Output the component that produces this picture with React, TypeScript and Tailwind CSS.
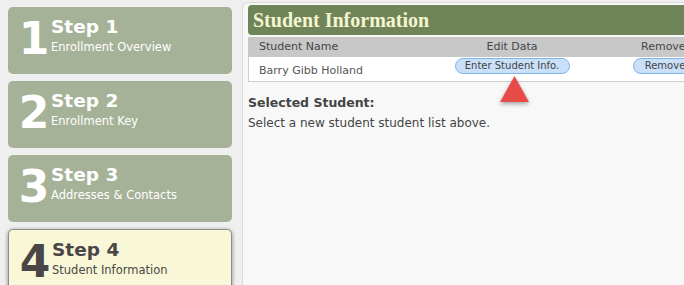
import React from "react";

const steps = [
  { n: "1", title: "Step 1", sub: "Enrollment Overview" },
  { n: "2", title: "Step 2", sub: "Enrollment Key" },
  { n: "3", title: "Step 3", sub: "Addresses & Contacts" },
  { n: "4", title: "Step 4", sub: "Student Information", active: true },
];

function StepCard({ n, title, sub, active }: { n: string; title: string; sub: string; active?: boolean }) {
  return (
    <div
      className={`h-[67px] shrink-0 rounded-[5px] pl-[9px] pt-[10px] flex items-start ${
        active
          ? "bg-[#f8f8d8] border border-[#8a8a8a] shadow-[0_1px_4px_rgba(0,0,0,0.45)] text-[#4a4646]"
          : "bg-[#a6b297] text-white"
      }`}
    >
      <div className="w-[34px] shrink-0 text-center text-[44px] font-bold leading-none">{n}</div>
      <div className="mt-[1px] flex flex-col">
        <div className="text-[18.5px] font-bold leading-none">{title}</div>
        <div className="mt-[5px] text-[11.5px] leading-none">{sub}</div>
      </div>
    </div>
  );
}

export default function App() {
  return (
    <div
      className="relative flex h-[285px] w-[684px] overflow-hidden bg-[#efefef]"
      style={{ fontFamily: '"DejaVu Sans", Verdana, sans-serif' }}
    >
      <aside className="ml-2 flex w-[224px] shrink-0 flex-col gap-[7px] pt-[7px]">
        {steps.map((s) => (
          <StepCard key={s.n} {...s} />
        ))}
      </aside>

      <main className="ml-[10px] mt-[2px] min-w-0 flex-1 rounded-tl-[6px] border-l border-t border-[#dadada] bg-[#f8f8f8] pl-[5px] pt-[2px]">
        <div className="w-[506px]">
          <div className="flex h-[30px] items-center rounded-[4px] bg-[#6f8459] pl-[5px]">
            <h1
              className="text-[20px] font-bold text-[#f5f5cf]"
              style={{ fontFamily: '"Liberation Serif", "Times New Roman", serif' }}
            >
              Student Information
            </h1>
          </div>

          <div className="mt-[2px] text-[11px]">
            <div className="flex h-[20px] items-center bg-[#c8c8c8] text-[#454545]">
              <div className="w-[200px] pl-[11px]">Student Name</div>
              <div className="w-[128px] text-center">Edit Data</div>
              <div className="flex-1 pl-[65px]">Remove</div>
            </div>
            <div className="flex h-[25px] items-start border border-t-0 border-[#cfcfcf] bg-white pt-[1px] text-[#555]">
              <div className="w-[199px] pl-[10px] pt-[5px]">Barry Gibb Holland</div>
              <div className="flex w-[128px] justify-center">
                <button className="h-[16px] w-[115px] rounded-full border border-[#7fb2ea] bg-[#c9e0f8] text-[10px] leading-none text-[#444]">
                  Enter Student Info.
                </button>
              </div>
              <div className="flex-1 pl-[57px]">
                <button className="h-[16px] w-[64px] rounded-full border border-[#7fb2ea] bg-[#c9e0f8] text-[10px] leading-none text-[#444]">
                  Remove
                </button>
              </div>
            </div>
          </div>
        </div>

        <div className="mt-[12px] text-[12.5px] font-bold text-[#444]">Selected Student:</div>
        <div className="mt-[1px] text-[12px] text-[#444]">Select a new student student list above.</div>
      </main>

      <svg
        className="absolute left-[500px] top-[76px]"
        width="30"
        height="30"
        viewBox="0 0 30 30"
        style={{ filter: "drop-shadow(0 2px 2px rgba(0,0,0,0.35))" }}
      >
        <polygon points="14.5,0 29,26 0,26" fill="#e84a47" />
      </svg>
    </div>
  );
}
